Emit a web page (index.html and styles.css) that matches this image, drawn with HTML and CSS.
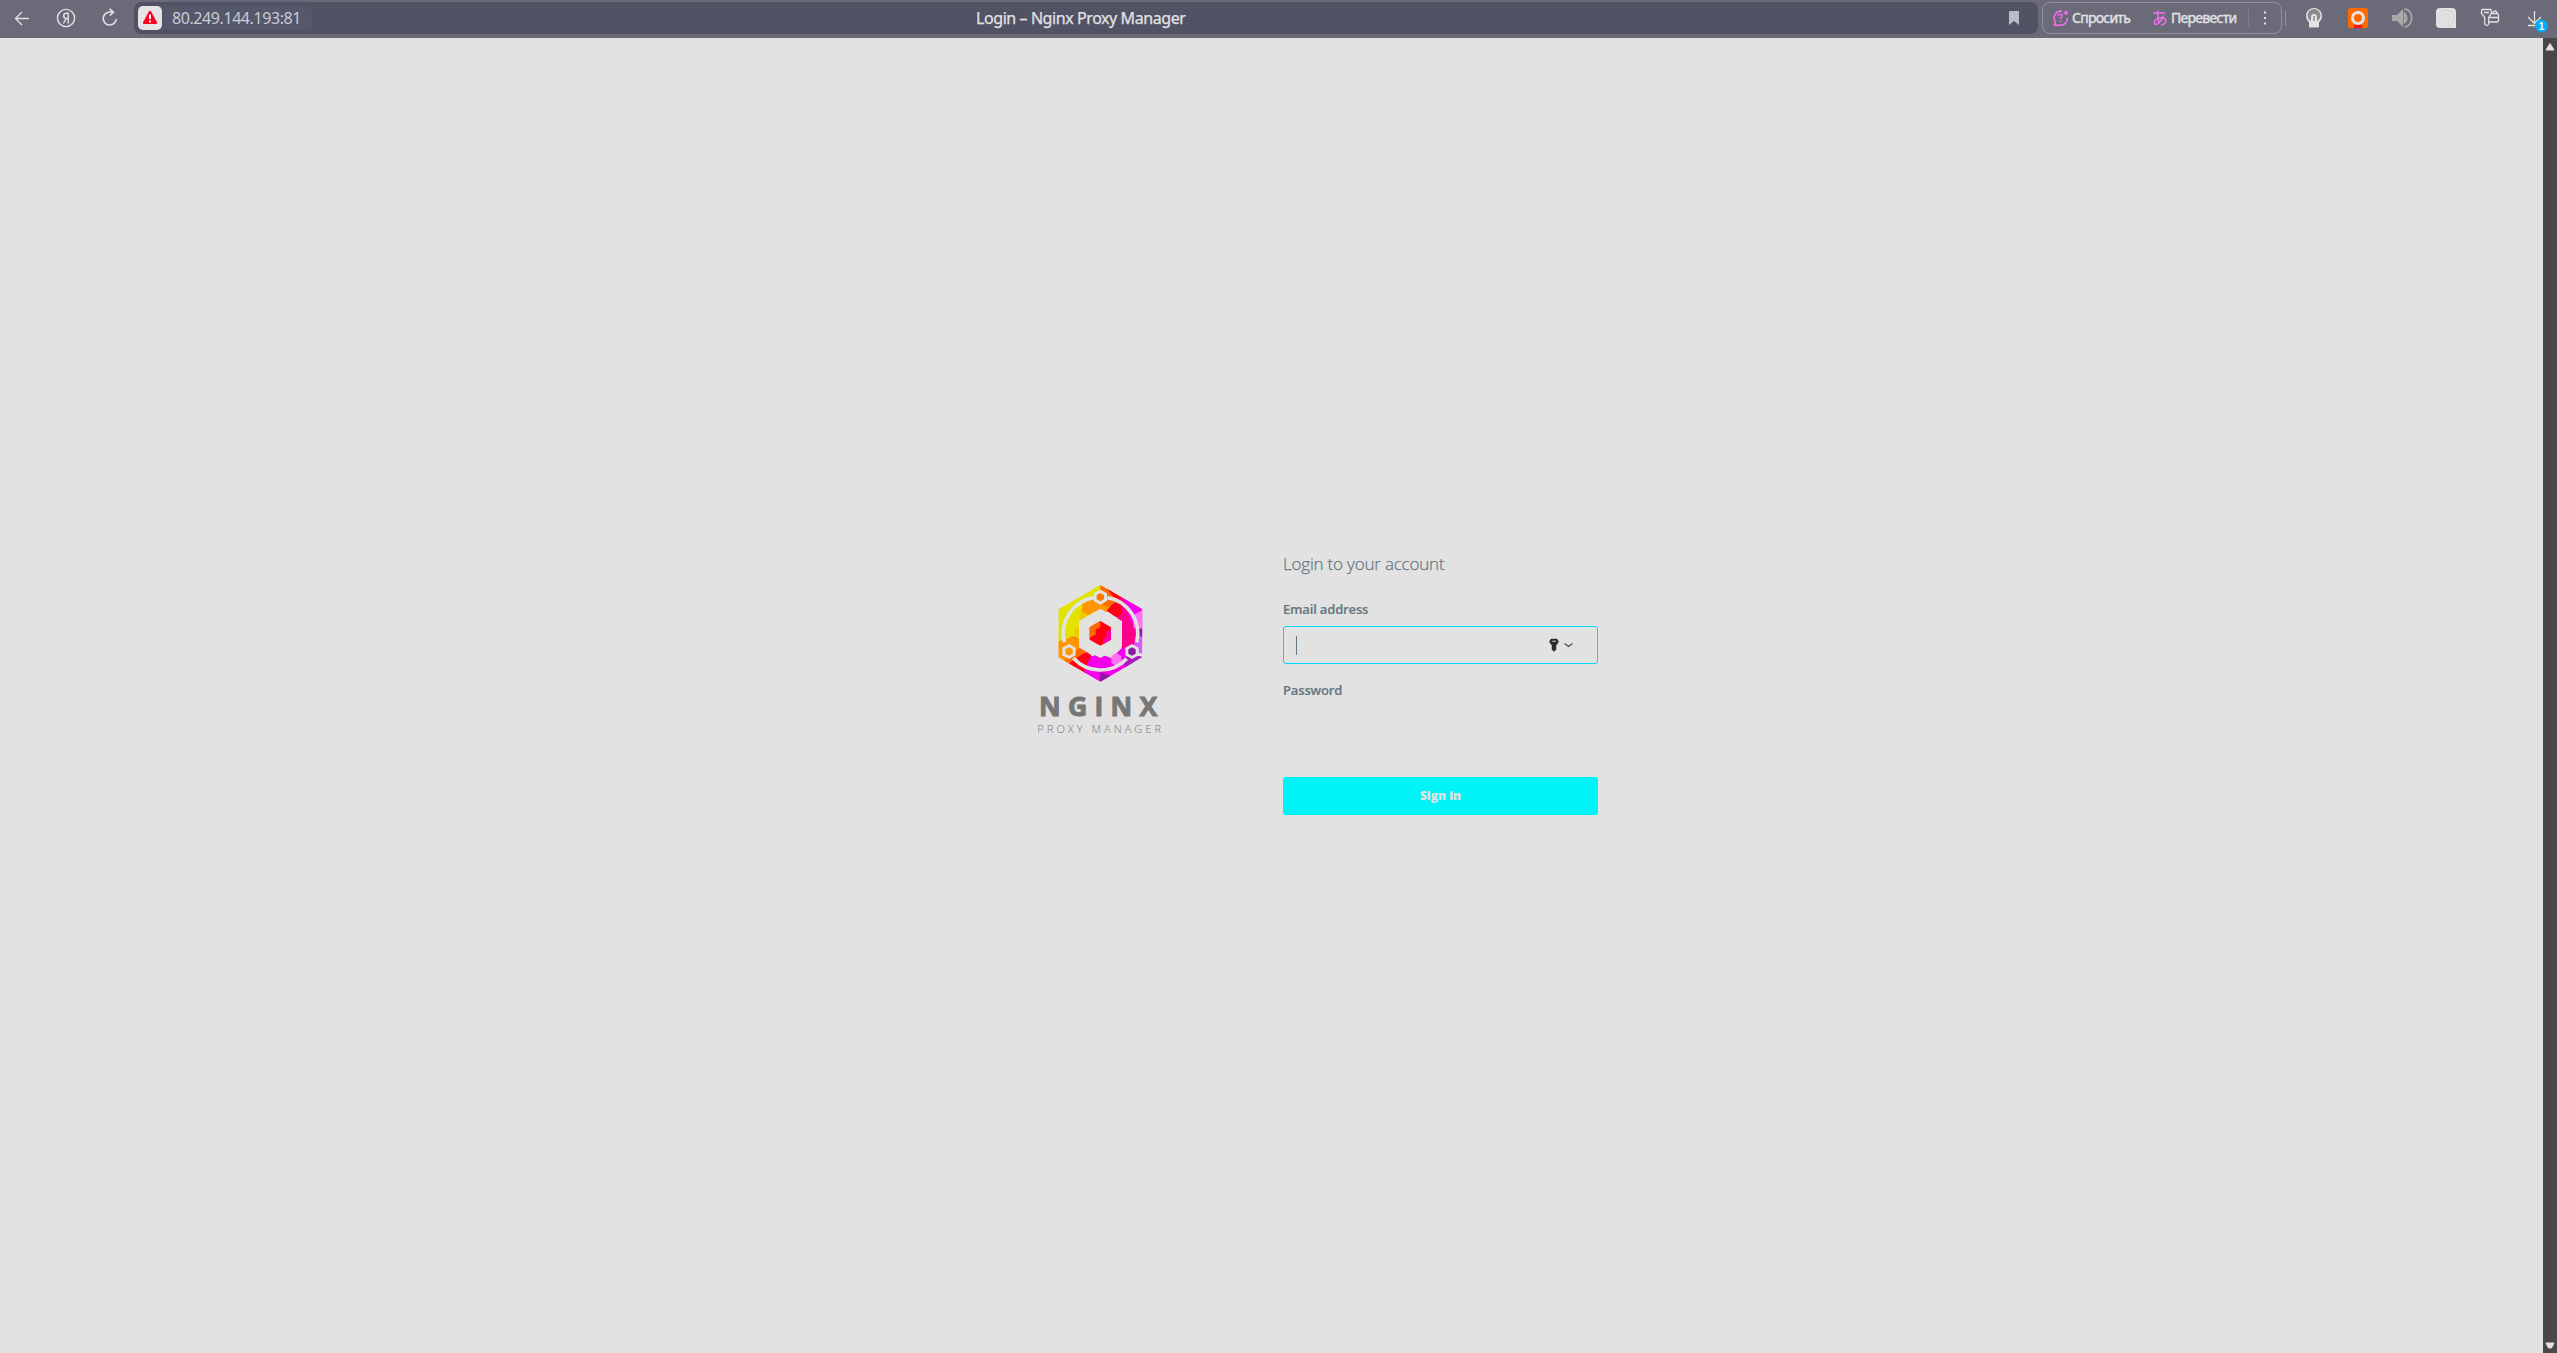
FILE: index.html
```html
<!DOCTYPE html>
<html lang="en">
<head>
<meta charset="utf-8">
<title>Login – Nginx Proxy Manager</title>
<link rel="stylesheet" href="styles.css">
</head>
<body>
<header class="toolbar">
  <nav class="nav">
    <svg width="134" height="38" viewBox="0 0 134 38" fill="none" stroke="#e2e2e4" stroke-width="1.4">
      <path d="M29 18.5H15.5M22 12l-6.5 6.5L22 25"/>
      <circle cx="66" cy="18" r="8.6"/>
      <path d="M68.2 23.500v-10.300h-1.800c-3.600 0-3.600 5.300 0 5.300h1.800M66.200 18.500l-2.800 5" stroke-width="1.400"/>
      <path d="M116.200 19a6.500 6.500 0 1 1-6.500-7h3.500M109.500 8.800l4 3.200-3.500 3.500" stroke-width="1.600"/>
    </svg>
  </nav>
  <div class="address">
    <span class="warn"><svg width="24" height="24" viewBox="0 0 24 24"><path d="M12 6.200L17.800 16.800H6.200Z" fill="#ff0020" stroke="#ff0020" stroke-width="2.600" stroke-linejoin="round"/><path d="M12 8.500v4.500M12 14.500v2" stroke="#fff" stroke-width="2"/></svg></span>
    <span class="url">80.249.144.193:81</span>
    <span class="title">Login – Nginx Proxy Manager</span>
    <svg class="bookmark" width="12" height="16" viewBox="0 0 12 16"><path d="M1 2q0-1 1-1h8q1 0 1 1v13L6 11 1 15Z" fill="#b9bbc8"/></svg>
  </div>
  <div class="tools">
    <svg class="ask-icon" width="18" height="18" viewBox="0 0 18 18" fill="none" stroke="#f56cf0" stroke-width="1.600"><path d="M10 2.200A6.800 6.800 0 0 0 3.500 13L2.500 16.300h6A6.800 6.800 0 0 0 15.300 9"/><path d="M6.500 7c0-2.600 4.200-2.400 3.800 0-.2 1.300-1.800 1.500-1.800 3M8.500 11.500v1.600" stroke-width="1.400"/><path d="M14 1.500v4.500M11.800 3.700h4.500"/></svg>
    <span class="ask">Спросить</span>
    <svg class="tr-icon" width="16" height="17" viewBox="0 0 16 17" fill="none" stroke="#f56cf0" stroke-width="1.500"><path d="M1 3h12.500M6 .500C5.300 5 5.500 10 7.500 13.500M11.500 5.500C9.500 12 5 15.500 3 14 .5 11.500 5 7.300 10.500 7.700c5 .5 4 6.300-1.500 7.600"/></svg>
    <span class="translate">Перевести</span>
    <i class="split"></i>
    <svg class="dots" width="4" height="16" viewBox="0 0 4 16" fill="#e2e2e4"><path d="M1 1.500h2v2H1zM1 7h2v2H1zM1 12.500h2v2H1z"/></svg>
  </div>
  <svg class="extensions" width="272" height="38" viewBox="0 0 272 38" fill="none">
    <path d="M.5 10v16" stroke="#92929e"/>
    <circle cx="29" cy="16" r="8" fill="#e2e2e2"/><circle cx="29" cy="15.500" r="6.500" fill="#8b8b8b"/><path d="M26 22v-5q0-3 3-3t3 3v5" fill="#e2e2e2"/><path d="M29 16v5" stroke="#777" stroke-width="1.200"/><rect x="24" y="21" width="10" height="6.500" rx="1" fill="#e2e2e2"/>
    <rect x="63" y="8" width="20" height="20" rx="2.500" fill="#ff6a00"/><path d="M69 28v-3l4-2 4 2v3" fill="#f11"/><circle cx="73" cy="18" r="5.500" stroke="#e8e2e0" stroke-width="3"/>
    <path d="M107 15h5l6-6v18l-6-6h-5z" fill="#a9a9a9"/><path d="M119.500 13.500q4.500 4.500 0 9zM119.500 9c9.500 1 9.500 17 0 18" stroke="#a9a9a9" stroke-width="1.800"/>
    <path d="M155 8h12q4 0 4 4v16h-16q-4 0-4-4V12q0-4 4-4" fill="#e2e2e2"/><circle cx="161" cy="18" r="8" stroke="#cfcfcf" stroke-dasharray="3 1"/><circle cx="161" cy="18" r="4" stroke="#d3d3d3" stroke-dasharray="2 1"/>
    <path d="M197 9.500h9l.5 3.500-2.800 4.500v6.500q-2 3-4 0v-6.500L196.300 13ZM199 12.500h5M204 22h8q1.500 0 1.500-2v-5q0-1.500-1.500-1.500h-5.500M204.500 17.500h9M208 13.500v-1q.5-1.500 2-1.500t2 2" stroke="#e2e2e4" stroke-width="1.300"/>
    <path d="M249.500 11v12M243 17l6.500 6.500L256 17M243 25.500h12" stroke="#e2e2e4" stroke-width="1.300"/>
    <circle cx="256.500" cy="26" r="6.500" fill="#00adfa"/><text x="256.500" y="29.500" class="badge">1</text>
  </svg>
</header>
<div class="viewport">
  <main class="login">
    <div class="brand">
      <svg width="160" height="180" viewBox="0 0 480 540">
        <defs><clipPath id="hex"><path d="M241 45 367 118V262L241 335 115 262V118Z"/></clipPath></defs>
        <g clip-path="url(#hex)">
          <path fill="#e3e300" d="M100 30H245V190L170 215 100 230Z"/>
          <path fill="#f0c800" d="M182 118l18-10 18 10v20l-40 18zM164 178l12-7 12 7v22l-12 7-12-7z"/>
          <path fill="#ff9500" d="M187 99l18-9 36-18 36 18v30l-36 12-18-7-18 9-18-9zM100 220l62-22 15 10v28l17 10-20 50-74-20z"/>
          <path fill="#ff6a00" d="M241 30l62 40-18 28-22 12-22-11zM178 234l20 10-12 24-34 16-20-12 20-20z"/>
          <path fill="#ff0016" d="M260 55l50 26v28l24 10-10 34-38-13-26-18 15-18 16-10zM180 257l20-11 14 10v25l-20 30-48-30z"/>
          <path fill="#ff008c" d="M300 76l70 38v110l-65 20v-75l-18-22 17-15z"/>
          <path fill="#f400ed" d="M310 78l60 30v75l-20-8-20-25zM211 260l30-9 33 14 31-30 35-5v75l-99 40-55-25z"/>
          <path fill="#ff70f5" d="M340 135l30-16v54l-14 8-16-8zM274 258l15-9 15 9v21l-15 9-15-9z"/>
          <path fill="#d85aff" d="M350 180l20-8v80l-32-10 8-35z"/>
          <path fill="#8d18a2" d="M357 176h12v26l-12-5zM241 307l31 10-22 22-10-4z"/>
          <path fill="#a51dbd" d="M308 265l25-11 36 6-52 33z"/>
          <path fill="none" stroke="#950056" stroke-opacity=".25" stroke-width="2" d="M285 80v27l-22 14M310 109l22 10v25M150 199l30 10v28M212 256v26l-25 12M306 205l28-14 24 12M241 250v25l30 13"/>
        </g>
        <path fill="#e2e2e2" d="M241 116 306 153V228L241 264 177 228V153Z"/>
        <path fill="#ff0016" d="M241 153 273 172V209L241 227 209 209V172Z"/>
        <path fill="#ff6a00" d="M241 153v18l-14 8v15l-18 9v-31Z"/><path fill="#ff009d" d="M273 178v31l-24 14v-16l10-7v-14Z"/>
        <g fill="none" stroke="#e2e2e2" stroke-width="11">
          <path d="M222 83A109 109 0 0 0 133 217M262 83A109 109 0 0 1 350 217M160 264A109 109 0 0 0 320 266"/>
        </g>
        <g fill="#e2e2e2"><path d="M241 59l20 11v23l-20 11-20-11V70zM147 222l20 11v23l-20 11-20-11v-23zM336 222l20 11v23l-20 11-20-11v-23z"/></g>
        <path fill="#ff7900" d="M241 69l11 6v13l-11 6-11-6V75z"/><path fill="#ff9500" d="M147 232l11 6v13l-11 6-11-6v-13z"/><path fill="#8d18a2" d="M336 232l11 6v13l-11 6-11-6v-13z"/>
        <text class="brand-name" x="57" y="438" textLength="355">NGINX</text>
        <text class="brand-sub" x="52" y="488" textLength="371">PROXY MANAGER</text>
      </svg>
    </div>
    <form class="form">
      <h1>Login to your account</h1>
      <label class="email">Email address</label>
      <div class="field">
        <i class="caret"></i>
        <svg width="26" height="14" viewBox="0 0 26 14"><path d="M2 1h6l1.500 2.500L8 6.500H7v5L5 13.500 3 11.500v-5H2L.500 3.500z" fill="#2c2c2c" stroke="#2c2c2c" stroke-width=".5"/><path d="M3.300 3.200h3.500" stroke="#ddd"/><path d="M15.500 5.500l4 3 4-3" fill="none" stroke="#444" stroke-width="1.100"/></svg>
      </div>
      <label class="password">Password</label>
      <button type="button"><span>Sign in</span></button>
    </form>
  </main>
  <aside class="scrollbar">
    <svg width="14" height="10" viewBox="0 0 14 10"><path d="M7 1.500L11 8H3Z" fill="#e2e2e2" stroke="#e2e2e2" stroke-linejoin="round"/></svg>
    <svg width="14" height="10" viewBox="0 0 14 10"><path d="M3 2h8L8.500 7h-3Z" fill="#e2e2e2" stroke="#e2e2e2" stroke-linejoin="round"/></svg>
  </aside>
</div>
</body>
</html>
```
FILE: styles.css
```css
* { box-sizing: border-box; }
body { margin: 0; height: 1353px; overflow: hidden; display: flex; flex-direction: column; background: #e2e2e2; font-family: "Open Sans", sans-serif; }
svg { display: block; flex: none; }
.toolbar { height: 38px; flex: none; display: flex; align-items: flex-start; background: #6a6a79; color: #e2e2e4; white-space: nowrap; }
.nav { width: 134px; }
.address { width: 1904px; height: 32px; margin-top: 2px; padding-left: 4px; display: flex; align-items: center; background: #515364; border-radius: 7px; }
.warn { width: 24px; height: 24px; border-radius: 5px; background: #e6e4e6; }
.url { width: 148px; height: 24px; margin-left: 2px; padding-left: 8px; border-radius: 5px; background: #55586a; color: #c9cbd9; font: 16px/24px "Noto Sans", sans-serif; letter-spacing: -.42px; }
.title { margin-left: 664px; width: 1033px; font: 16px/30px "Noto Sans", sans-serif; letter-spacing: -.42px; -webkit-text-stroke: .25px; }
.bookmark { margin-left: -1px; }
.tools { width: 240px; height: 32px; margin: 2px 0 0 4px; padding-left: 9px; display: flex; align-items: center; border: 1px solid #92929e; border-radius: 8px; font: 14px/28px "Noto Sans", sans-serif; -webkit-text-stroke: .4px; }
.ask { width: 80px; margin-left: 2px; letter-spacing: -.75px; }
.tr-icon { margin-left: 0; }
.translate { width: 77px; margin-left: 3px; letter-spacing: -.72px; }
.split { width: 1px; height: 18px; background: #7e7e8b; }
.dots { margin-left: 14px; }
.extensions { margin-left: 3px; }
.badge { fill: #fff; font: bold 10px "Liberation Sans", sans-serif; text-anchor: middle; }
.viewport { flex: 1; display: flex; }
.login { flex: 1; display: flex; align-items: flex-start; padding: 510px 0 0 1020px; }
.brand { width: 160px; padding-top: 22px; margin-right: 103px; }
.brand-name { fill: #777; stroke: #777; stroke-width: 3px; font: bold 80px "Open Sans", sans-serif; }
.brand-sub { fill: #777; font: 300 33px "Open Sans", sans-serif; }
.form { width: 315px; display: flex; flex-direction: column; color: #667883; }
h1 { margin: 4px 0 0; font-size: 17px; line-height: 24px; font-weight: 300; letter-spacing: -.2px; -webkit-text-stroke: .25px; }
label { font-size: 13px; line-height: 20px; font-weight: 600; -webkit-text-stroke: .2px; }
.email { margin-top: 23px; letter-spacing: -.16px; }
.field { height: 38px; margin-top: 7px; border: 1px solid #00d5fa; border-radius: 3px; display: flex; align-items: center; justify-content: space-between; padding: 0 22px 0 12px; }
.caret { width: 1px; height: 19px; background: #667883; }
.password { margin-top: 16px; letter-spacing: -.16px; }
button { height: 38px; margin-top: 77px; padding: 0; border: 0; border-radius: 3px; background: #00f3f5; color: #e2e2e2; font: 800 12px/38px "Open Sans", sans-serif; }
.scrollbar { width: 14px; background: #484848; display: flex; flex-direction: column; justify-content: space-between; padding: 4px 0 2px; }
```
